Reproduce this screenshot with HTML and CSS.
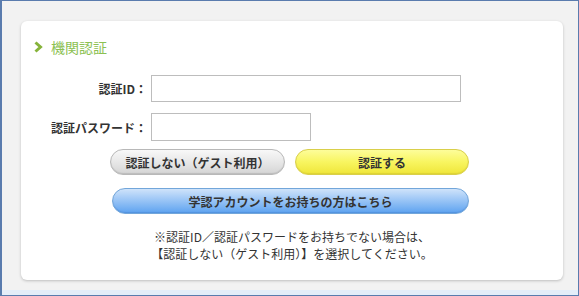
FILE: index.html
```html
<!DOCTYPE html>
<html>
<head>
	<meta charset="UTF-8">
	<title>機関認証</title>
	<link rel="stylesheet" href="styles.css">
</head>
<body>
	<div class="frame">
		<div class="card">
			<h1 class="title">
				<svg class="chev" width="9" height="12" viewBox="0 0 9 12"><polyline points="1.5,1.5 6.5,6 1.5,10.5" fill="none" stroke="#86b33a" stroke-width="3"/></svg>
				機関認証
			</h1>
			<div class="row">
				<label class="lbl">認証ID：</label>
				<input class="inp inp-id" type="text">
			</div>
			<div class="row row2">
				<label class="lbl">認証パスワード：</label>
				<input class="inp inp-pw" type="password">
			</div>
			<div class="btns">
				<button class="btn gray">認証しない（ゲスト利用）</button>
				<button class="btn yellow">認証する</button>
			</div>
			<button class="btn blue">学認アカウントをお持ちの方はこちら</button>
			<p class="note">※認証ID／認証パスワードをお持ちでない場合は、<br>【認証しない（ゲスト利用）】を選択してください。</p>
		</div>
		<div class="band"></div>
	</div>
</body>
</html>
```
FILE: styles.css
```css
html, body { margin: 0; padding: 0; }
body { font-family: "Noto Sans CJK JP", "DejaVu Sans", sans-serif; color: #333; }
.frame { width: 579px; height: 296px; box-sizing: border-box; border: 1px solid #5a7cae; border-left-width: 2px; background: #f2f2f2; display: flex; flex-direction: column; }
.card { margin: 20px 0 0 19px; width: 542px; height: 259px; box-sizing: border-box; background: #fff; border-radius: 6px; box-shadow: 0 1px 3px rgba(0,0,0,.22); }
.title { margin: 0; padding: 17px 0 0 13px; height: 18px; font-size: 14px; line-height: 18px; font-weight: normal; color: #8cc152; display: flex; align-items: center; gap: 8px; }
.row { display: flex; align-items: center; margin-top: 19px; }
.row2 { margin-top: 11px; }
.lbl { width: 126px; text-align: right; font-size: 12px; font-weight: bold; color: #333; margin-right: 4px; }
.inp { box-sizing: border-box; height: 28px; border: 1px solid #bdbdbd; padding: 2px 4px; font-size: 13px; outline: none; }
.inp-id { width: 310px; height: 27px; }
.inp-pw { width: 160px; }
.btns { display: flex; gap: 10px; margin: 8px 0 0 89px; }
.btn { display: block; box-sizing: border-box; height: 26px; border-radius: 13px; font-family: inherit; font-size: 12px; font-weight: bold; color: #333; padding: 0; cursor: pointer; }
.gray { width: 175px; border: 1px solid #b8b8b8; background: linear-gradient(#f8f8f8, #e4e4e4 60%, #d4d4d4); box-shadow: inset 0 -1px 1px rgba(0,0,0,.12); }
.yellow { width: 174px; border: 1px solid #d9cf4a; background: linear-gradient(#fdfd9a, #f8f560 50%, #efe63a); box-shadow: inset 0 -1px 1px rgba(120,100,0,.15); }
.blue { width: 357px; margin: 13px 0 0 91px; border: 1px solid #72a6da; background: linear-gradient(#cfe3fa, #9cc6f6 45%, #5ea3f0); box-shadow: inset 0 -1px 1px rgba(0,40,120,.15); }
.note { margin: 14px 0 0; font-size: 12px; line-height: 17px; text-align: center; color: #333; }
.band { margin-top: auto; height: 5px; background: #e4edf9; }
```
